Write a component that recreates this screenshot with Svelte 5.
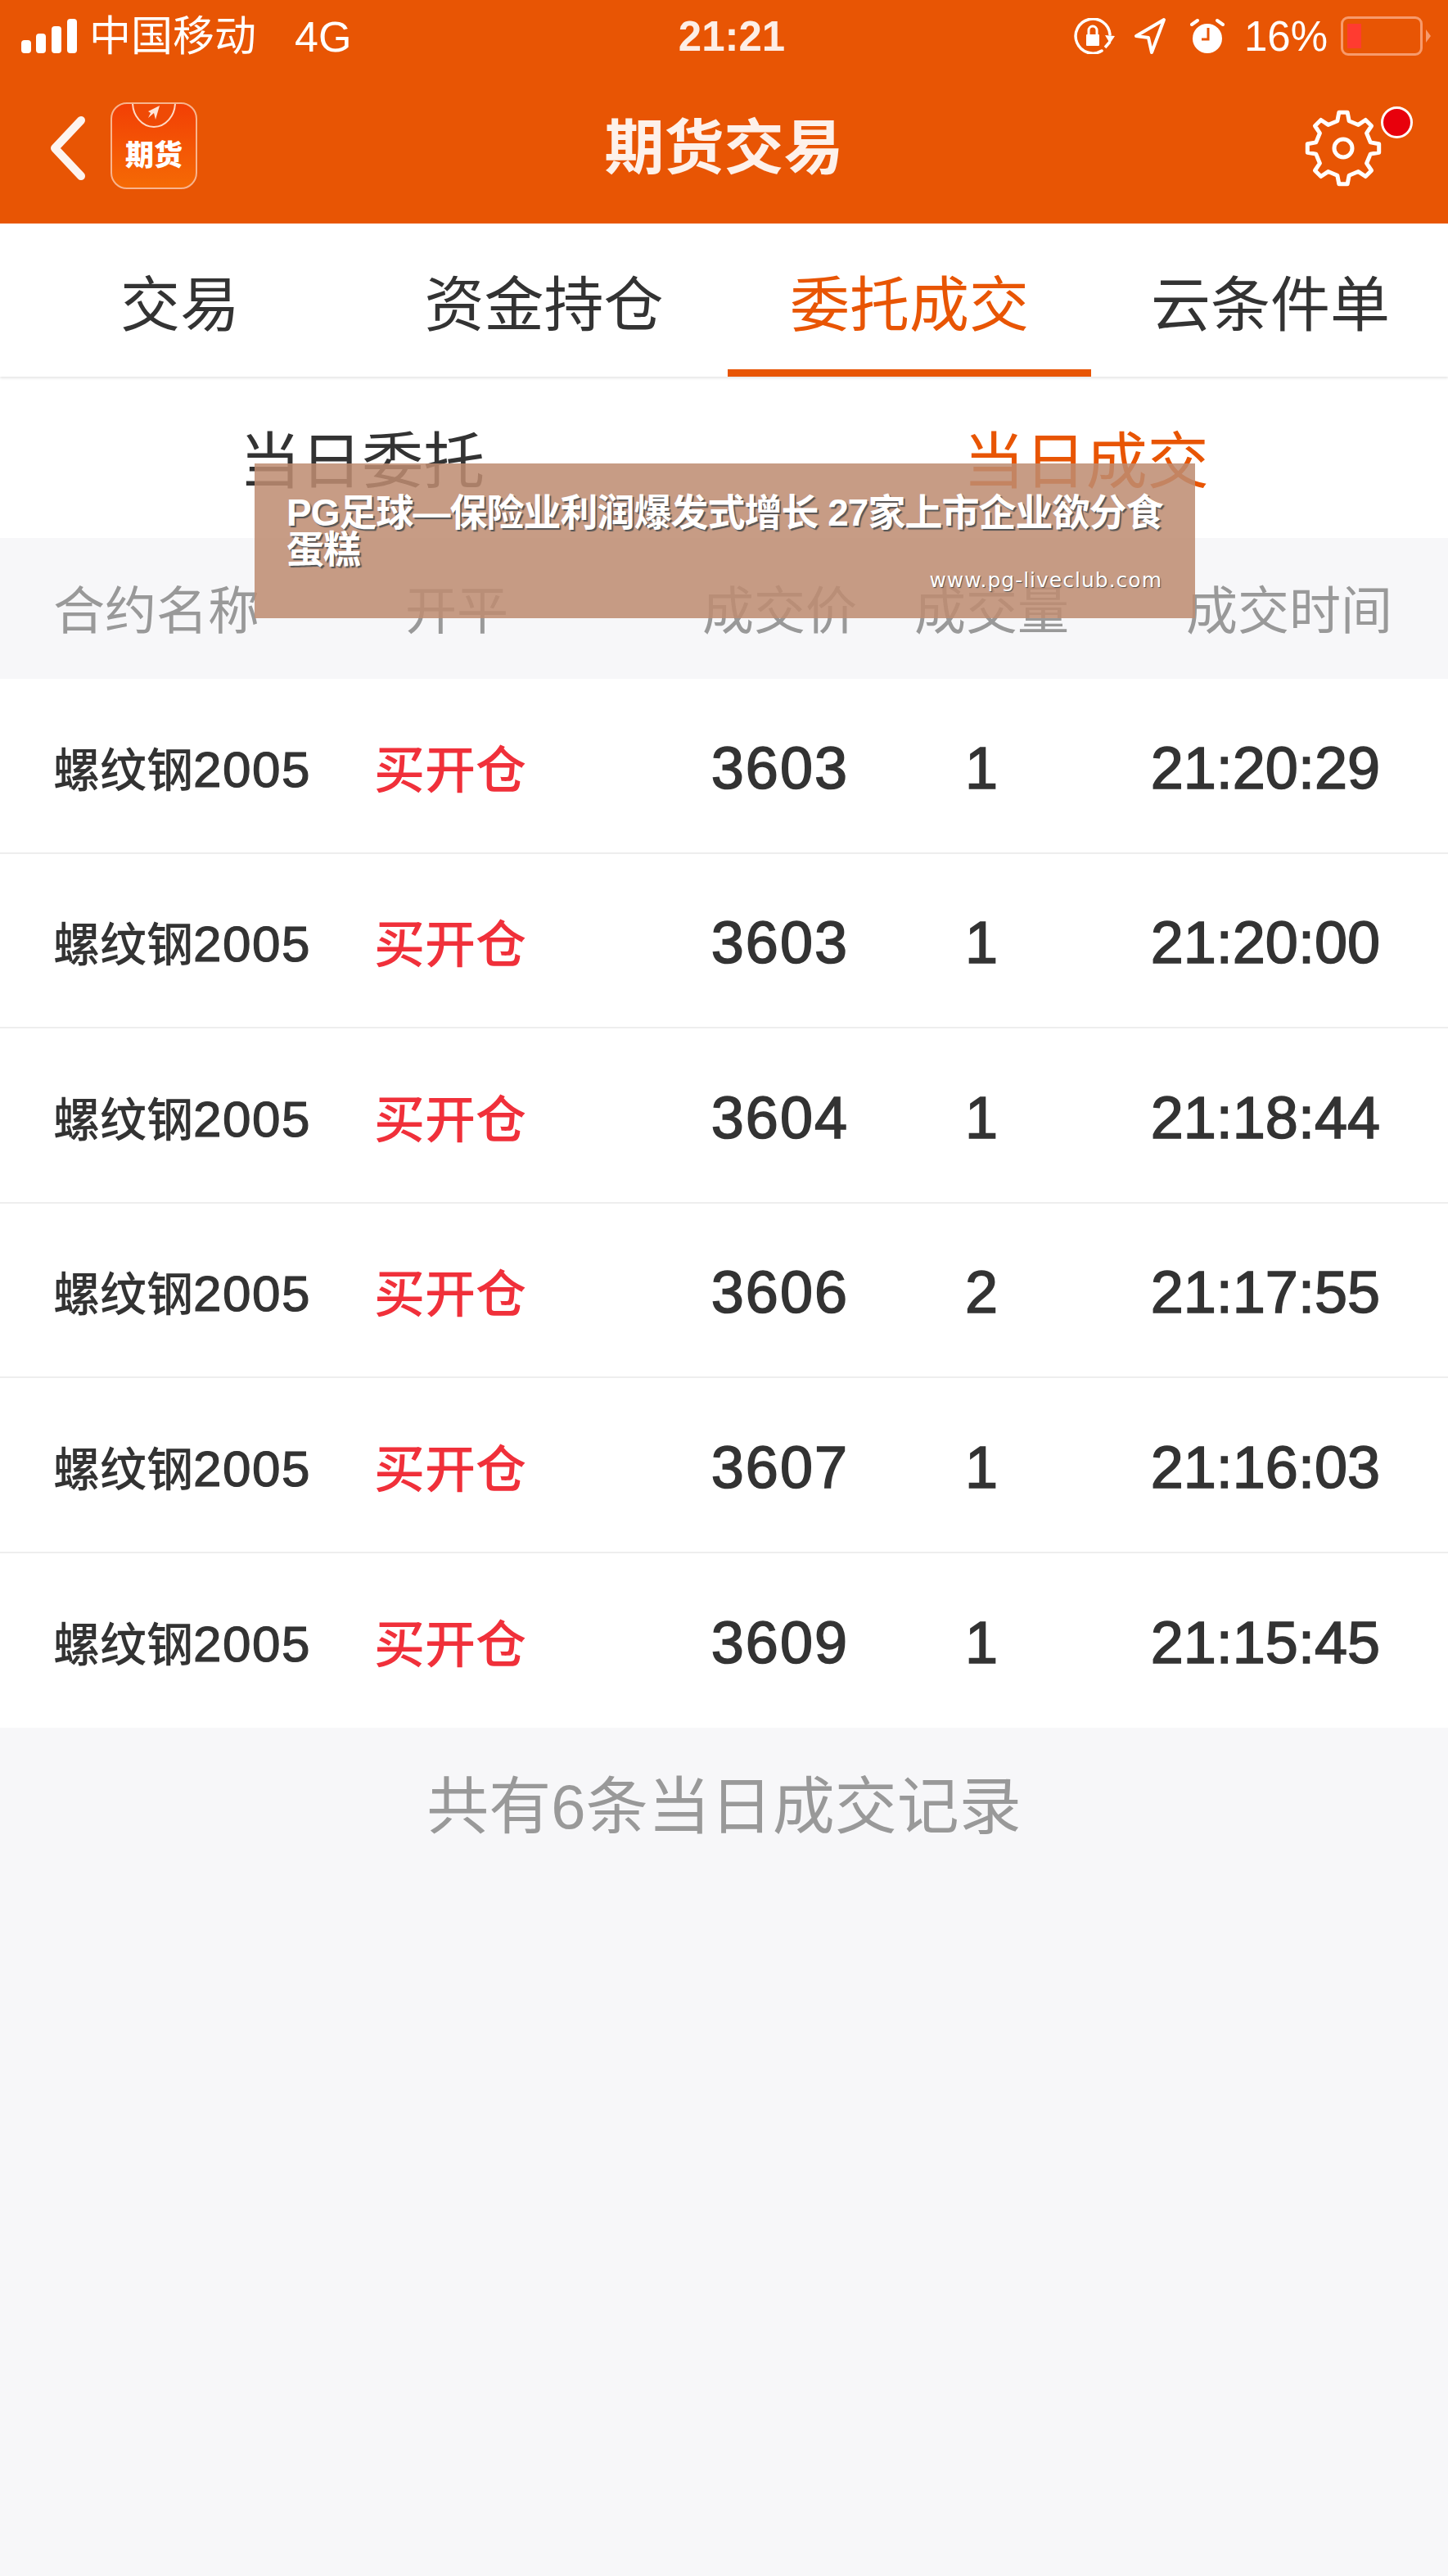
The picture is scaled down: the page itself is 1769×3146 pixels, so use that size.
<script lang="ts">
  const tabs = ['交易', '资金持仓', '委托成交', '云条件单'];
  const trades = [
    { price: '3603', qty: 1, time: '21:20:29' },
    { price: '3603', qty: 1, time: '21:20:00' },
    { price: '3604', qty: 1, time: '21:18:44' },
    { price: '3606', qty: 2, time: '21:17:55' },
    { price: '3607', qty: 1, time: '21:16:03' },
    { price: '3609', qty: 1, time: '21:15:45' },
  ];

  // 8 tooth gear outline, centred on 50,50
  function gearPath() {
    const pts: string[] = [];
    const teeth = 8;
    for (let i = 0; i < teeth; i++) {
      const a = (i / teeth) * Math.PI * 2 - Math.PI / 2;
      const step = (Math.PI * 2) / teeth;
      const ring = [
        [a - step * 0.27, 34],
        [a - step * 0.15, 44],
        [a + step * 0.15, 44],
        [a + step * 0.27, 34],
      ];
      for (const [t, r] of ring) {
        pts.push(`${(50 + r * Math.cos(t)).toFixed(2)} ${(50 + r * Math.sin(t)).toFixed(2)}`);
      }
    }
    return 'M' + pts.join('L') + 'Z';
  }
</script>

<div class="page">
  <header class="top">
    <div class="status">
      <div class="status-left">
        <svg class="signal" viewBox="0 0 68 42" width="68" height="42">
          <rect x="0" y="26" width="12" height="16" rx="4" />
          <rect x="18" y="18" width="12" height="24" rx="4" />
          <rect x="37" y="9" width="12" height="33" rx="4" />
          <rect x="56" y="0" width="12" height="42" rx="4" />
        </svg>
        <span class="carrier">中国移动</span>
        <span class="net">4G</span>
      </div>
      <div class="clock">21:21</div>
      <div class="status-right">
        <svg class="ic lock" viewBox="0 0 50 44" width="50" height="44">
          <path d="M44 20A21 21 0 1 0 34 40" fill="none" stroke="#fff" stroke-width="3.500" stroke-linecap="round" />
          <path d="M38 36l6-7" fill="none" stroke="#fff" stroke-width="3.500" />
          <path d="M38 21l12 1-6 9z" fill="#fff" />
          <rect x="15" y="20" width="16" height="14" rx="1" fill="#fff" />
          <path d="M18 20v-5a5 5 0 0 1 10 0v5" fill="none" stroke="#fff" stroke-width="3" />
        </svg>
        <svg class="ic arrow" viewBox="0 0 40 46" width="40" height="46">
          <path d="M37 3L3 23l15 2 4 18z" fill="none" stroke="#fff" stroke-width="4" stroke-linejoin="round" />
        </svg>
        <svg class="ic alarm" viewBox="0 0 42 44" width="42" height="44">
          <circle cx="21" cy="25" r="18" fill="#fff" />
          <path d="M2 8l7-5M40 8l-7-5" stroke="#fff" stroke-width="4" stroke-linecap="round" />
          <path d="M22 12v14h-8" fill="none" stroke="#e85504" stroke-width="3" />
        </svg>
        <span class="pct">16%</span>
        <div class="battery"><div class="battery-level"></div></div>
        <div class="battery-nub"></div>
      </div>
    </div>

    <nav class="navbar">
      <div class="nav-left">
        <svg viewBox="0 0 44 78" width="44" height="78">
          <path d="M38 5L6 39l32 34" fill="none" stroke="#fdf4ef" stroke-width="10" stroke-linecap="round" stroke-linejoin="round" />
        </svg>
        <div class="app-icon">
          <svg viewBox="0 0 106 36" width="106" height="36">
            <path d="M27 0a26 30 0 0 0 52 0" fill="#ef4a06" stroke="#ffd9c4" stroke-width="2" />
            <path d="M46 11l14-7-5 17-2-8-7 6 3-6z" fill="#ffe5d8" />
          </svg>
          <span>期货</span>
        </div>
      </div>
      <h1>期货交易</h1>
      <div class="nav-right">
        <svg class="gear" viewBox="0 0 100 100" width="100" height="100">
          <path d={gearPath()} fill="none" stroke="#fff" stroke-width="5" stroke-linejoin="round" />
          <circle cx="50" cy="50" r="11" fill="none" stroke="#fff" stroke-width="5" />
        </svg>
        <span class="dot"></span>
      </div>
    </nav>
  </header>

  <div class="tabs">
    {#each tabs as t, i}
      <div class="tab" class:active={i === 2}>{t}</div>
    {/each}
  </div>

  <div class="subtabs">
    <div class="sub">当日委托</div>
    <div class="sub active">当日成交</div>
  </div>

  <div class="thead">
    <span>合约名称</span>
    <span>开平</span>
    <span>成交价</span>
    <span>成交量</span>
    <span>成交时间</span>
  </div>

  <div class="rows">
    {#each trades as r}
      <div class="row">
        <span class="name">螺纹钢<b>2005</b></span>
        <span class="side">买开仓</span>
        <span class="num price">{r.price}</span>
        <span class="num qty">{r.qty}</span>
        <span class="num time">{r.time}</span>
      </div>
    {/each}
  </div>

  <p class="total">共有6条当日成交记录</p>

  <aside class="banner">
    <div class="banner-title">PG足球—保险业利润爆发式增长 27家上市企业欲分食蛋糕</div>
    <div class="banner-url">www.pg-liveclub.com</div>
  </aside>
</div>

<style>
  :global(body) {
    margin: 0;
    background: #f7f7f9;
  }

  .page {
    position: relative;
    width: 1769px;
    min-height: 3146px;
    background: #f7f7f9;
    font-family: 'Liberation Sans', 'Noto Sans CJK SC', sans-serif;
    color: #333;
    overflow: hidden;
  }

  .top {
    background: #e85504;
    height: 273px;
    color: #fff;
  }

  .status {
    display: grid;
    grid-template-columns: 1fr auto 1fr;
    align-items: center;
    height: 88px;
    padding: 0 21px 0 26px;
  }

  .status-left,
  .status-right {
    display: flex;
    align-items: center;
  }

  .status-right {
    justify-content: flex-end;
  }

  .signal {
    fill: #fff;
  }

  .carrier {
    margin-left: 15px;
    font-size: 51px;
    line-height: 60px;
    padding-top: 2px;
  }

  .net {
    margin-left: 47px;
    font-size: 52px;
    padding-top: 2px;
  }

  .clock {
    font-size: 51px;
    font-weight: 700;
    margin-left: 14px;
    color: #fdeee6;
  }

  .ic {
    flex: none;
  }

  .lock {
    margin-right: 23px;
  }

  .arrow {
    margin-right: 29px;
  }

  .alarm {
    margin-right: 24px;
  }

  .pct {
    font-size: 51px;
    margin-right: 16px;
  }

  .battery {
    box-sizing: border-box;
    width: 100px;
    height: 48px;
    border: 3px solid #f79a6c;
    border-radius: 9px;
    padding: 6px 5px;
    display: flex;
  }

  .battery-level {
    width: 17px;
    background: #ff3b30;
  }

  .battery-nub {
    width: 0;
    height: 0;
    margin-left: 4px;
    border-left: 6px solid #f79a6c;
    border-top: 8px solid transparent;
    border-bottom: 8px solid transparent;
  }

  .navbar {
    display: grid;
    grid-template-columns: 1fr auto 1fr;
    align-items: center;
    height: 185px;
    padding: 0 61px;
  }

  .nav-left {
    display: flex;
    align-items: center;
    gap: 30px;
  }

  .app-icon {
    position: relative;
    box-sizing: border-box;
    width: 106px;
    height: 106px;
    margin-top: -6px;
    border: 2px solid #f8b48e;
    border-radius: 20px;
    background: linear-gradient(#f23f05, #f56a05);
    overflow: hidden;
    text-align: center;
  }

  .app-icon svg {
    position: absolute;
    top: -2px;
    left: -2px;
  }

  .app-icon span {
    position: absolute;
    left: 0;
    right: 0;
    top: 43px;
    font-size: 35px;
    line-height: 40px;
    font-weight: 900;
    color: #fff;
  }

  .navbar h1 {
    margin: 0;
    font-size: 73px;
    font-weight: 700;
    line-height: 1;
    color: #fdf1ea;
  }

  .nav-right {
    position: relative;
    display: flex;
    justify-content: flex-end;
    padding-right: 17px;
  }

  .dot {
    position: absolute;
    right: -18px;
    top: -1px;
    box-sizing: border-box;
    width: 39px;
    height: 39px;
    border-radius: 50%;
    background: #e8000c;
    border: 3px solid #fff;
  }

  .tabs {
    display: grid;
    grid-template-columns: 440px 449px 444px 1fr;
    height: 187px;
    background: #fff;
    box-shadow: 0 2px 3px #e6e6e6;
    position: relative;
  }

  .tab {
    position: relative;
    display: flex;
    align-items: center;
    justify-content: center;
    font-size: 73px;
    color: #333;
    padding-bottom: 2px;
  }

  .tab:last-child {
    padding-left: 2px;
  }

  .tab.active {
    color: #e85504;
  }

  .tab.active::after {
    content: '';
    position: absolute;
    left: 0;
    right: 0;
    bottom: 0;
    height: 9px;
    background: #e85504;
  }

  .subtabs {
    display: grid;
    grid-template-columns: 1fr 1fr;
    height: 197px;
    background: #fff;
  }

  .sub {
    font-size: 75px;
    line-height: 1;
    padding-top: 67px;
    text-align: center;
    color: #333;
  }

  .sub.active {
    color: #e85504;
  }

  .thead {
    display: grid;
    grid-template-columns: 430px 363px 259px 1fr 1fr;
    box-sizing: border-box;
    height: 172px;
    align-items: center;
    padding: 0 68px 6px 65px;
    font-size: 63px;
    color: #999;
    background: #f7f7f9;
    white-space: nowrap;
  }

  .thead span:nth-child(5) {
    text-align: right;
  }

  .rows {
    background: #fff;
  }

  .row {
    display: grid;
    grid-template-columns: 392px 303px 277px 326px 1fr;
    box-sizing: border-box;
    height: 213.5px;
    align-items: center;
    padding: 6px 83px 0 65px;
    border-bottom: 2px solid #eeeeee;
  }

  .row:last-child {
    border-bottom: 0;
  }

  .name {
    font-size: 57px;
    font-weight: 500;
    color: #333;
    margin-bottom: 4px;
  }

  .name b {
    font-weight: 400;
    font-size: 62px;
    letter-spacing: 1.5px;
    -webkit-text-stroke: 1.2px #333;
  }

  .side {
    font-size: 62px;
    font-weight: 500;
    color: #f0303a;
    margin-bottom: 4px;
  }

  .num {
    font-weight: 400;
    font-size: 72px;
    letter-spacing: 2px;
    color: #333;
    -webkit-text-stroke: 1.6px #333;
  }

  .price,
  .time {
    text-align: right;
  }

  .time {
    letter-spacing: 0;
  }

  .qty {
    text-align: center;
  }

  .total {
    margin: 52px 0 0;
    text-align: center;
    font-size: 76px;
    line-height: 90px;
    color: #999;
  }

  .banner {
    position: absolute;
    left: 311px;
    top: 566px;
    box-sizing: border-box;
    width: 1149px;
    height: 189px;
    padding: 38px 20px 0 39px;
    background: rgba(190, 140, 113, 0.86);
    color: #fff;
  }

  .banner-title {
    font-size: 46px;
    line-height: 45px;
    font-weight: 700;
    letter-spacing: -1px;
    text-shadow: 2px 2px 1px #555;
  }

  .banner-url {
    position: absolute;
    right: 40px;
    top: 128px;
    font-family: 'DejaVu Sans', sans-serif;
    font-size: 25px;
    line-height: 30px;
    letter-spacing: 1px;
    text-shadow: 1px 1px 1px #4d4d4d;
  }
</style>
